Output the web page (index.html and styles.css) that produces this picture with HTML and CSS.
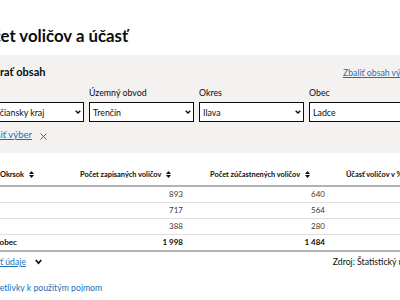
FILE: index.html
```html
<!DOCTYPE html>
<html lang="sk">
<head>
<meta charset="utf-8">
<title>Počet voličov a účasť</title>
<link rel="stylesheet" href="styles.css">
</head>
<body>
<div class="page">
  <h1 class="title">Počet voličov a účasť</h1>

  <section class="panel">
    <div class="panel-head">
      <h2 class="panel-title">Vybrať obsah</h2>
      <a class="link" href="#">Zbaliť obsah výberu</a>
    </div>
    <div class="fields">
      <div class="field">
        <label class="label">Kraj</label>
        <div class="select"><span>Trenčiansky kraj</span><svg class="chev" width="6" height="4" viewBox="0 0 6 4"><path d="M0.7 0.7 L3 3 L5.3 0.7" fill="none" stroke="#0b0c0c" stroke-width="1.4"/></svg></div>
      </div>
      <div class="field">
        <label class="label">Územný obvod</label>
        <div class="select"><span>Trenčín</span><svg class="chev" width="6" height="4" viewBox="0 0 6 4"><path d="M0.7 0.7 L3 3 L5.3 0.7" fill="none" stroke="#0b0c0c" stroke-width="1.4"/></svg></div>
      </div>
      <div class="field">
        <label class="label">Okres</label>
        <div class="select"><span>Ilava</span><svg class="chev" width="6" height="4" viewBox="0 0 6 4"><path d="M0.7 0.7 L3 3 L5.3 0.7" fill="none" stroke="#0b0c0c" stroke-width="1.4"/></svg></div>
      </div>
      <div class="field">
        <label class="label">Obec</label>
        <div class="select"><span>Ladce</span><svg class="chev" width="6" height="4" viewBox="0 0 6 4"><path d="M0.7 0.7 L3 3 L5.3 0.7" fill="none" stroke="#0b0c0c" stroke-width="1.4"/></svg></div>
      </div>
    </div>
    <div class="clear">
      <a class="link clear-link" href="#">Zrušiť výber</a>
      <svg class="xicon" width="7" height="7" viewBox="0 0 7 7"><path d="M0.5 0.5 L6.5 6.5 M6.5 0.5 L0.5 6.5" fill="none" stroke="#1d70b8" stroke-width="1"/></svg>
    </div>
  </section>

  <table class="data">
    <colgroup>
      <col class="w1"><col class="w2"><col class="w3"><col class="w4">
    </colgroup>
    <thead>
      <tr>
        <th class="c1">Okrsok<svg class="sort" width="5" height="7" viewBox="0 0 5 7"><path d="M0 3 L2.5 0 L5 3 Z M0 4 L2.5 7 L5 4 Z" fill="#0b0c0c"/></svg></th>
        <th class="c2">Počet zapisaných voličov<svg class="sort" width="5" height="7" viewBox="0 0 5 7"><path d="M0 3 L2.5 0 L5 3 Z M0 4 L2.5 7 L5 4 Z" fill="#0b0c0c"/></svg></th>
        <th class="c3">Počet zúčastnených voličov<svg class="sort" width="5" height="7" viewBox="0 0 5 7"><path d="M0 3 L2.5 0 L5 3 Z M0 4 L2.5 7 L5 4 Z" fill="#0b0c0c"/></svg></th>
        <th class="c4">Účasť voličov v %<svg class="sort" width="5" height="7" viewBox="0 0 5 7"><path d="M0 3 L2.5 0 L5 3 Z M0 4 L2.5 7 L5 4 Z" fill="#0b0c0c"/></svg></th>
      </tr>
    </thead>
    <tbody>
      <tr><td></td><td class="num">893</td><td class="num">640</td><td class="num">71,67</td></tr>
      <tr><td></td><td class="num">717</td><td class="num">564</td><td class="num">78,66</td></tr>
      <tr><td></td><td class="num">388</td><td class="num">280</td><td class="num">72,16</td></tr>
      <tr class="total"><td class="sum-label">Spolu za obec</td><td class="num">1 998</td><td class="num">1 484</td><td class="num">74,27</td></tr>
    </tbody>
  </table>

  <div class="table-foot">
    <div class="toggle">
      <a class="link toggle-link" href="#">Zobraziť údaje</a>
      <svg class="down" width="7" height="6" viewBox="0 0 7 6"><path d="M0.8 1 L3.5 4.2 L6.2 1" fill="none" stroke="#0b0c0c" stroke-width="1.7"/></svg>
    </div>
    <span class="source">Zdroj: Štatistický úrad SR</span>
  </div>

  <div class="notes">
    <a class="link notes-link" href="#">Vysvetlivky k použitým pojmom</a>
  </div>
</div>
</body>
</html>
```

FILE: styles.css
```css
html, body {
  margin: 0;
  padding: 0;
  background: #ffffff;
  overflow: hidden;
}

body {
  font-family: Lato, "Liberation Sans", sans-serif;
  color: #0b0c0c;
}

.page {
  margin-left: -27px;
  width: 494px;
}

.title {
  font-size: 16.8px;
  font-weight: 700;
  line-height: 20px;
  margin: 26px 0 9px;
}

.panel {
  background: #f3f2f1;
  padding: 10px 49px 11px 6px;
}

.panel-head {
  display: flex;
  justify-content: space-between;
  align-items: baseline;
  height: 14px;
}

.panel-title {
  font-size: 11px;
  line-height: 14px;
  font-weight: 700;
  margin: 0 0 0 1.5px;
}

.link {
  color: #1d70b8;
  text-decoration: underline;
  text-decoration-thickness: 1px;
  text-underline-offset: 1px;
  font-size: 8.7px;
  line-height: 14px;
}

.fields {
  display: grid;
  grid-template-columns: repeat(4, 105px);
  column-gap: 5px;
  margin-top: 8px;
}

.label {
  display: block;
  font-size: 8.8px;
  line-height: 12px;
  margin-bottom: 3px;
}

.select {
  box-sizing: border-box;
  height: 20px;
  background: #ffffff;
  border: 1px solid #0b0c0c;
  display: flex;
  align-items: center;
  justify-content: space-between;
  padding: 0 2px 0 3px;
  font-size: 8.8px;
  white-space: nowrap;
}

.chev {
  display: block;
  flex: none;
}

.clear {
  display: flex;
  align-items: center;
  gap: 8px;
  margin-top: 6px;
  height: 14px;
}

.clear-link {
  font-size: 9.5px;
  margin-left: 3px;
}

.xicon {
  display: block;
  margin-top: 2px;
}

.data {
  margin-top: 11px;
  border-collapse: separate;
  border-spacing: 0;
  table-layout: fixed;
  width: 494px;
  font-size: 8px;
}

.w1 { width: 105px; }
.w2 { width: 107px; }
.w3 { width: 142px; }
.w4 { width: 140px; }

.data th {
  font-size: 7.4px;
  font-weight: 700;
  text-align: left;
  line-height: 21px;
  padding: 0;
  border-bottom: 2px solid #b1b4b6;
  white-space: nowrap;
}

.data th.c1 { padding-left: 27px; }
.data th.c2 { padding-left: 2px; }
.data th.c3 { padding-left: 25px; }
.data th.c4 { padding-left: 19px; }

.sort {
  vertical-align: -1px;
  margin-left: 5px;
}

.data td {
  line-height: 15px;
  padding: 0;
  border-bottom: 1px solid #dedede;
  color: #3b3b3b;
  white-space: nowrap;
}

.data td.num {
  text-align: right;
  padding-right: 2px;
}

.data tr.total td {
  font-weight: 700;
  color: #0b0c0c;
  border-bottom: 2px solid #b1b4b6;
}

.data td.sum-label {
  text-indent: -5px;
}

.table-foot {
  display: flex;
  justify-content: space-between;
  align-items: center;
  margin-top: 3px;
  height: 14px;
  padding-right: 39px;
}

.toggle {
  display: flex;
  align-items: center;
  gap: 9px;
}

.toggle-link {
  margin-left: -1.3px;
}

.down {
  display: block;
}

.source {
  font-size: 8.7px;
  line-height: 14px;
}

.notes {
  margin-top: 9px;
  height: 14px;
  line-height: 14px;
}

.notes-link {
  margin-left: 8.5px;
}
```
